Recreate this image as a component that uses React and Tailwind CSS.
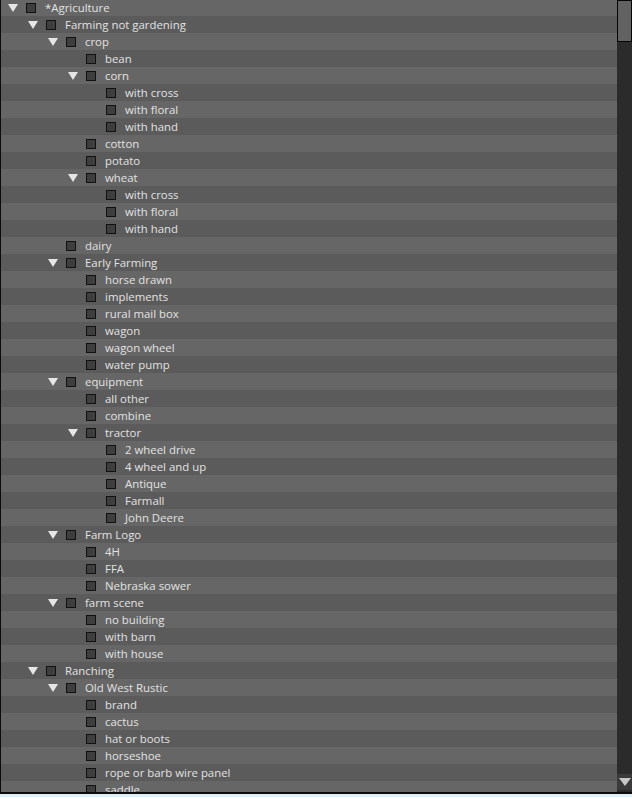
import React from "react";

const items = [
  [0, "*Agriculture", true],
  [1, "Farming not gardening", true],
  [2, "crop", true],
  [3, "bean"],
  [3, "corn", true],
  [4, "with cross"],
  [4, "with floral"],
  [4, "with hand"],
  [3, "cotton"],
  [3, "potato"],
  [3, "wheat", true],
  [4, "with cross"],
  [4, "with floral"],
  [4, "with hand"],
  [2, "dairy"],
  [2, "Early Farming", true],
  [3, "horse drawn"],
  [3, "implements"],
  [3, "rural mail box"],
  [3, "wagon"],
  [3, "wagon wheel"],
  [3, "water pump"],
  [2, "equipment", true],
  [3, "all other"],
  [3, "combine"],
  [3, "tractor", true],
  [4, "2 wheel drive"],
  [4, "4 wheel and up"],
  [4, "Antique"],
  [4, "Farmall"],
  [4, "John Deere"],
  [2, "Farm Logo", true],
  [3, "4H"],
  [3, "FFA"],
  [3, "Nebraska sower"],
  [2, "farm scene", true],
  [3, "no building"],
  [3, "with barn"],
  [3, "with house"],
  [1, "Ranching", true],
  [2, "Old West Rustic", true],
  [3, "brand"],
  [3, "cactus"],
  [3, "hat or boots"],
  [3, "horseshoe"],
  [3, "rope or barb wire panel"],
  [3, "saddle"],
];

function Row({ level, label, open, idx }) {
  return (
    <div
      className={`flex h-[17px] shrink-0 items-center ${idx % 2 === 0 ? "bg-[#666666]" : "bg-[#5b5b5b]"}`}
      style={{ paddingLeft: level * 20 }}
    >
      <div className="flex w-[25px] shrink-0 items-center justify-start pl-[7px]">
        {open && (
          <svg width="10" height="8" viewBox="0 0 10 8">
            <polygon points="0,0 10,0 5,8" fill="#e6e6e6" />
          </svg>
        )}
      </div>
      <div className="h-[10px] w-[10px] shrink-0 border border-[#111111] bg-[#3e3e3e]" />
      <span className="ml-[9px] whitespace-nowrap text-[11.4px] leading-none text-[#e2e2e2] [font-family:'Open_Sans','Noto_Sans',sans-serif]">
        {label}
      </span>
    </div>
  );
}

export default function App() {
  return (
    <div className="h-[797px] w-[632px] bg-[#dff0f9] overflow-hidden">
      <div className="flex h-[794px] w-[632px] border-b-2 border-l border-[#0c0c0c] bg-[#5b5b5b]">
        <div className="flex flex-1 flex-col overflow-hidden">
          <div className="-mt-px flex flex-col">
            {items.map(([level, label, open], i) => (
              <Row key={i} idx={i} level={level} label={label} open={open} />
            ))}
          </div>
        </div>
        <div className="flex w-[15px] shrink-0 flex-col justify-between bg-[#2b2b2b]">
          <div className="h-[42px] w-full border border-[#050505] bg-[#626262]" />
          <div className="flex h-[16px] items-center justify-center bg-[#3a3a3a] mb-[2px]">
            <svg width="12" height="8" viewBox="0 0 12 8">
              <polygon points="0,0 12,0 6,8" fill="#c8c8c8" />
            </svg>
          </div>
        </div>
      </div>
    </div>
  );
}
